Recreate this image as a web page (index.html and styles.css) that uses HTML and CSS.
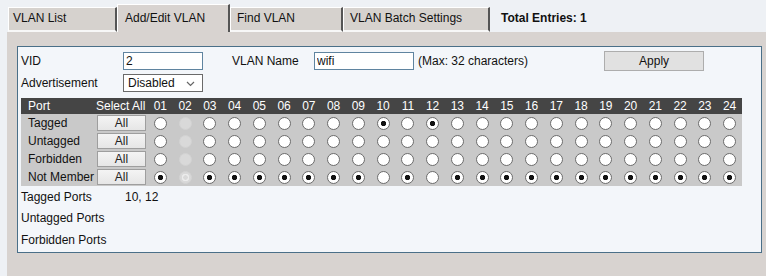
FILE: index.html
```html
<!DOCTYPE html>
<html lang="en">
<head>
  <meta charset="UTF-8" />
  <title>VLAN Settings</title>
  <link rel="stylesheet" href="styles.css">
</head>
<body>

<div class="page">
  <div class="tabs">
    <div class="tab">VLAN List</div>
    <div class="tab active">Add/Edit VLAN</div>
    <div class="tab">Find VLAN</div>
    <div class="tab wide">VLAN Batch Settings</div>
    <div class="total">Total Entries: 1</div>
  </div>

  <div class="panel">
    <div class="box">
      <div class="form-row">
        <span class="label">VID</span>
        <input class="field short" type="text" value="2" />
        <span class="label name-label">VLAN Name</span>
        <input class="field long" type="text" value="wifi" />
        <span class="hint">(Max: 32 characters)</span>
        <button class="apply" type="button">Apply</button>
      </div>
      <div class="form-row second">
        <span class="label">Advertisement</span>
        <span class="select-wrap">
          <select class="field short">
            <option>Disabled</option>
            <option>Enabled</option>
          </select>
          <svg class="chevron" width="9" height="6" viewBox="0 0 9 6"><path d="M1 1 L4.5 4.5 L8 1" fill="none" stroke="#666" stroke-width="1.2"/></svg>
        </span>
      </div>

      <table class="ports">
        <colgroup><col class="c-port"><col class="c-all"></colgroup>
        <thead>
          <tr>
            <th class="rowname">Port</th><th class="selall">Select All</th>
            <th>01</th><th>02</th><th>03</th><th>04</th><th>05</th><th>06</th><th>07</th><th>08</th>
            <th>09</th><th>10</th><th>11</th><th>12</th><th>13</th><th>14</th><th>15</th><th>16</th>
            <th>17</th><th>18</th><th>19</th><th>20</th><th>21</th><th>22</th><th>23</th><th>24</th>
          </tr>
        </thead>
        <tbody>
          <tr>
            <td class="rowname">Tagged</td><td><button class="all" type="button">All</button></td>
            <td><input type="radio" name="p01"></td><td><input type="radio" name="p02" disabled></td>
            <td><input type="radio" name="p03"></td><td><input type="radio" name="p04"></td>
            <td><input type="radio" name="p05"></td><td><input type="radio" name="p06"></td>
            <td><input type="radio" name="p07"></td><td><input type="radio" name="p08"></td>
            <td><input type="radio" name="p09"></td><td><input type="radio" name="p10" checked></td>
            <td><input type="radio" name="p11"></td><td><input type="radio" name="p12" checked></td>
            <td><input type="radio" name="p13"></td><td><input type="radio" name="p14"></td>
            <td><input type="radio" name="p15"></td><td><input type="radio" name="p16"></td>
            <td><input type="radio" name="p17"></td><td><input type="radio" name="p18"></td>
            <td><input type="radio" name="p19"></td><td><input type="radio" name="p20"></td>
            <td><input type="radio" name="p21"></td><td><input type="radio" name="p22"></td>
            <td><input type="radio" name="p23"></td><td><input type="radio" name="p24"></td>
          </tr>
          <tr>
            <td class="rowname">Untagged</td><td><button class="all" type="button">All</button></td>
            <td><input type="radio" name="p01"></td><td><input type="radio" name="p02" disabled></td>
            <td><input type="radio" name="p03"></td><td><input type="radio" name="p04"></td>
            <td><input type="radio" name="p05"></td><td><input type="radio" name="p06"></td>
            <td><input type="radio" name="p07"></td><td><input type="radio" name="p08"></td>
            <td><input type="radio" name="p09"></td><td><input type="radio" name="p10"></td>
            <td><input type="radio" name="p11"></td><td><input type="radio" name="p12"></td>
            <td><input type="radio" name="p13"></td><td><input type="radio" name="p14"></td>
            <td><input type="radio" name="p15"></td><td><input type="radio" name="p16"></td>
            <td><input type="radio" name="p17"></td><td><input type="radio" name="p18"></td>
            <td><input type="radio" name="p19"></td><td><input type="radio" name="p20"></td>
            <td><input type="radio" name="p21"></td><td><input type="radio" name="p22"></td>
            <td><input type="radio" name="p23"></td><td><input type="radio" name="p24"></td>
          </tr>
          <tr>
            <td class="rowname">Forbidden</td><td><button class="all" type="button">All</button></td>
            <td><input type="radio" name="p01"></td><td><input type="radio" name="p02" disabled></td>
            <td><input type="radio" name="p03"></td><td><input type="radio" name="p04"></td>
            <td><input type="radio" name="p05"></td><td><input type="radio" name="p06"></td>
            <td><input type="radio" name="p07"></td><td><input type="radio" name="p08"></td>
            <td><input type="radio" name="p09"></td><td><input type="radio" name="p10"></td>
            <td><input type="radio" name="p11"></td><td><input type="radio" name="p12"></td>
            <td><input type="radio" name="p13"></td><td><input type="radio" name="p14"></td>
            <td><input type="radio" name="p15"></td><td><input type="radio" name="p16"></td>
            <td><input type="radio" name="p17"></td><td><input type="radio" name="p18"></td>
            <td><input type="radio" name="p19"></td><td><input type="radio" name="p20"></td>
            <td><input type="radio" name="p21"></td><td><input type="radio" name="p22"></td>
            <td><input type="radio" name="p23"></td><td><input type="radio" name="p24"></td>
          </tr>
          <tr>
            <td class="rowname">Not Member</td><td><button class="all" type="button">All</button></td>
            <td><input type="radio" name="p01" checked></td><td><input type="radio" name="p02" disabled checked></td>
            <td><input type="radio" name="p03" checked></td><td><input type="radio" name="p04" checked></td>
            <td><input type="radio" name="p05" checked></td><td><input type="radio" name="p06" checked></td>
            <td><input type="radio" name="p07" checked></td><td><input type="radio" name="p08" checked></td>
            <td><input type="radio" name="p09" checked></td><td><input type="radio" name="p10"></td>
            <td><input type="radio" name="p11" checked></td><td><input type="radio" name="p12"></td>
            <td><input type="radio" name="p13" checked></td><td><input type="radio" name="p14" checked></td>
            <td><input type="radio" name="p15" checked></td><td><input type="radio" name="p16" checked></td>
            <td><input type="radio" name="p17" checked></td><td><input type="radio" name="p18" checked></td>
            <td><input type="radio" name="p19" checked></td><td><input type="radio" name="p20" checked></td>
            <td><input type="radio" name="p21" checked></td><td><input type="radio" name="p22" checked></td>
            <td><input type="radio" name="p23" checked></td><td><input type="radio" name="p24" checked></td>
          </tr>
        </tbody>
      </table>

      <div class="summary">
        <div class="sum-row"><span class="sum-label">Tagged Ports</span><span>10, 12</span></div>
        <div class="sum-row"><span class="sum-label">Untagged Ports</span><span></span></div>
        <div class="sum-row"><span class="sum-label">Forbidden Ports</span><span></span></div>
      </div>
    </div>
  </div>
</div>

</body>
</html>
```

FILE: styles.css
```css
body {
  font-family: "Liberation Sans", Arial, sans-serif;
  font-size: 12px;
  color: #111;
  background: #eef1f5;
  margin: 0;
  padding: 0;
}
.page {
  margin-left: 7px;
}

/* tab strip */
.tabs {
  display: flex;
  align-items: flex-end;
  height: 32px;
  padding-left: 1px;
}
.tab {
  box-sizing: border-box;
  width: 113px;
  height: 25px;
  display: flex;
  align-items: center;
  padding: 0 6px 3px;
  background: #d6d2ce;
  border-top: 1px solid #fff;
  border-left: 1px solid #fff;
  border-right: 2px solid #555;
  border-bottom: 2px solid #f7f7f7;
  font-size: 12px;
}
.tab:first-child {
  width: 109px;
  padding-left: 4px;
}
.tab.active {
  height: 28px;
  padding: 0 7px 2px;
  background: #d8d3d0;
  border-bottom: none;
}
.tab.wide {
  width: 147px;
}
.total {
  align-self: flex-end;
  height: 25px;
  display: flex;
  align-items: center;
  padding-bottom: 3px;
  box-sizing: border-box;
  margin-left: 11px;
  font-weight: bold;
}

/* panel */
.panel {
  background: #d8d3d0;
  padding: 14px 4px 30px 10px;
}
.box {
  background: #f3f6fa;
  border: 1px solid #4a6f88;
  padding: 4px 3px 1px;
}
.form-row {
  display: flex;
  align-items: center;
  height: 20px;
}
.form-row.second {
  margin-top: 3px;
  height: 18px;
}
.label {
  width: 102px;
}
.name-label {
  width: 82px;
  margin-left: 29px;
}
.field {
  box-sizing: border-box;
  height: 18px;
  margin: 0;
  padding: 0 2px;
  font-family: inherit;
  font-size: 12px;
  color: #111;
  background: #fff;
  border: 1px solid #5f84a0;
  border-radius: 0;
}
.field.short {
  width: 80px;
}
.field.long {
  width: 100px;
}
.hint {
  margin-left: 4px;
}
.apply {
  box-sizing: border-box;
  width: 100px;
  height: 20px;
  margin-left: 76px;
  padding: 0;
  font-family: inherit;
  font-size: 12px;
  color: #111;
  background: #e1e1e1;
  border: 1px solid #adadad;
}
.select-wrap {
  position: relative;
  display: inline-block;
  height: 18px;
}
select.field {
  appearance: none;
  -webkit-appearance: none;
  padding-left: 4px;
  border-color: #6a6a6a;
}
.chevron {
  position: absolute;
  right: 8px;
  top: 7px;
  pointer-events: none;
}

/* port table */
.ports {
  width: 721px;
  margin-top: 6px;
  border-collapse: collapse;
  table-layout: fixed;
  background: #c9c9c9;
}
.c-port {
  width: 75px;
}
.c-all {
  width: 52px;
}
.ports th {
  height: 16px;
  padding: 0;
  background: #454545;
  color: #fff;
  font-weight: normal;
  text-align: center;
}
.ports td {
  height: 18px;
  padding: 0;
  text-align: center;
}
.ports .rowname {
  text-align: left;
  padding-left: 7px;
}
.ports .selall {
  text-align: left;
  white-space: nowrap;
}
.all {
  display: block;
  box-sizing: border-box;
  width: 49px;
  height: 16px;
  margin: 0 0 0 1px;
  padding: 0;
  font-family: inherit;
  font-size: 12px;
  color: #222;
  background: linear-gradient(#f4f4f4, #e6e6e6);
  border: 1px solid #9e9e9e;
}
.ports input[type="radio"] {
  appearance: none;
  -webkit-appearance: none;
  box-sizing: border-box;
  width: 13px;
  height: 13px;
  margin: 0;
  vertical-align: middle;
  border: 1px solid #6b6b6b;
  border-radius: 50%;
  background: #fff;
}
.ports input[type="radio"]:checked {
  background: radial-gradient(circle, #111 0 2.3px, #fff 3px);
}
.ports input[type="radio"]:disabled {
  border-color: #d3d3d3;
  background: #d9d9d9;
}
.ports input[type="radio"]:disabled:checked {
  background: radial-gradient(circle, #d9d9d9 0 2px, #ececec 2.5px 3.5px, #d9d9d9 4px);
}

/* summary */
.sum-row {
  display: flex;
  align-items: center;
  height: 21.5px;
}
.sum-label {
  width: 104px;
}
```
